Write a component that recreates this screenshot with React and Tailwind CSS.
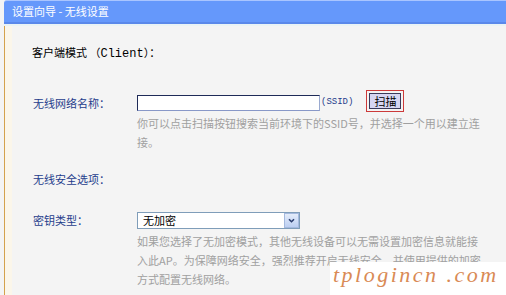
export default function App() {
  return (
    <div className="relative w-[506px] h-[295px] overflow-hidden bg-[#f4f4f4] font-['Noto_Sans_CJK_SC','Noto_Sans_CJK_JP',sans-serif] text-[11px]">
      <div className="ml-[4px] h-[24px] rounded-tl-[3px] border-t border-t-[#a9c5ff] border-b-2 border-b-[#5a88ea] bg-[#6598fb] pl-[8px] leading-[21px] text-white">
        设置向导 - 无线设置
      </div>
      <div className="ml-[4px] h-[2px] bg-[#eaf3f5]" />
      <div className="ml-[4px] flex h-[269px] border-l border-[#d4a24c]">
        <div className="w-[7px] bg-[#fbf6ea]" />
        <div className="flex flex-1 flex-col">
          <div className="ml-[20px] mt-[18px] leading-[16px] text-black">
            客户端模式 （<span className="font-['Liberation_Mono',monospace] text-[12px]">Client</span>）：
          </div>

          <div className="mt-[28px] flex items-start pl-[21px]">
            <div className="mt-[5px] w-[104px] leading-[16px] text-[#1f3d8c]">无线网络名称：</div>
            <div className="mt-[5px] h-[16px] w-[183px] border border-t-[#1f2b58] border-l-[#1f2b58] border-r-[#9aaad0] border-b-[#8898c8] bg-white" />
            <div className="ml-[1px] mt-[4px] font-['Liberation_Mono',monospace] text-[9px] leading-[16px] text-[#1f3d8c]">(SSID)</div>
            <div className="ml-[13px] h-[22px] border border-[#cc3a3a] p-[2px]">
              <div className="flex h-[16px] w-[32px] items-center justify-center border border-[#3a3a5a] bg-[#d6d6f2] leading-[14px] text-black">
                扫描
              </div>
            </div>
          </div>

          <div className="mt-[2px] whitespace-nowrap pl-[125px] leading-[19px] text-[#a0a0a0]">
            你可以点击扫描按钮搜索当前环境下的SSID号，并选择一个用以建立连
            <br />
            接。
          </div>

          <div className="ml-[21px] mt-[19px] leading-[16px] text-[#1f3d8c]">无线安全选项：</div>

          <div className="mt-[25px] flex items-start pl-[21px]">
            <div className="w-[104px] leading-[16px] text-[#1f3d8c]">密钥类型：</div>
            <div className="flex h-[17px] w-[163px] items-center border border-[#7f9db9] bg-white">
              <span className="flex-1 pl-[5px] leading-[15px] text-black">无加密</span>
              <span className="flex h-[15px] w-[15px] items-center justify-center border border-[#a4b9de] bg-linear-to-b from-[#e4ecfa] to-[#bccff2]">
                <svg width="9" height="9" viewBox="0 0 9 9">
                  <path d="M2 3.2 L4.5 5.7 L7 3.2" fill="none" stroke="#2a3d6e" strokeWidth="1.6" />
                </svg>
              </span>
            </div>
          </div>

          <div className="mt-[3px] whitespace-nowrap pl-[125px] leading-[19px] text-[#a0a0a0]">
            如果您选择了无加密模式，其他无线设备可以无需设置加密信息就能接
            <br />
            入此AP。为保障网络安全，强烈推荐开启无线安全，并使用提供的加密
            <br />
            方式配置无线网络。
          </div>
        </div>
      </div>

      <div className="absolute left-[330px] top-[262px] h-[33px] w-[176px] bg-white pl-[3px] pt-[2px] font-['Liberation_Serif',serif] text-[22px] italic leading-[22px] tracking-[2.5px] text-[#d98a55] whitespace-nowrap">
        tplogincn .com
      </div>
    </div>
  );
}
